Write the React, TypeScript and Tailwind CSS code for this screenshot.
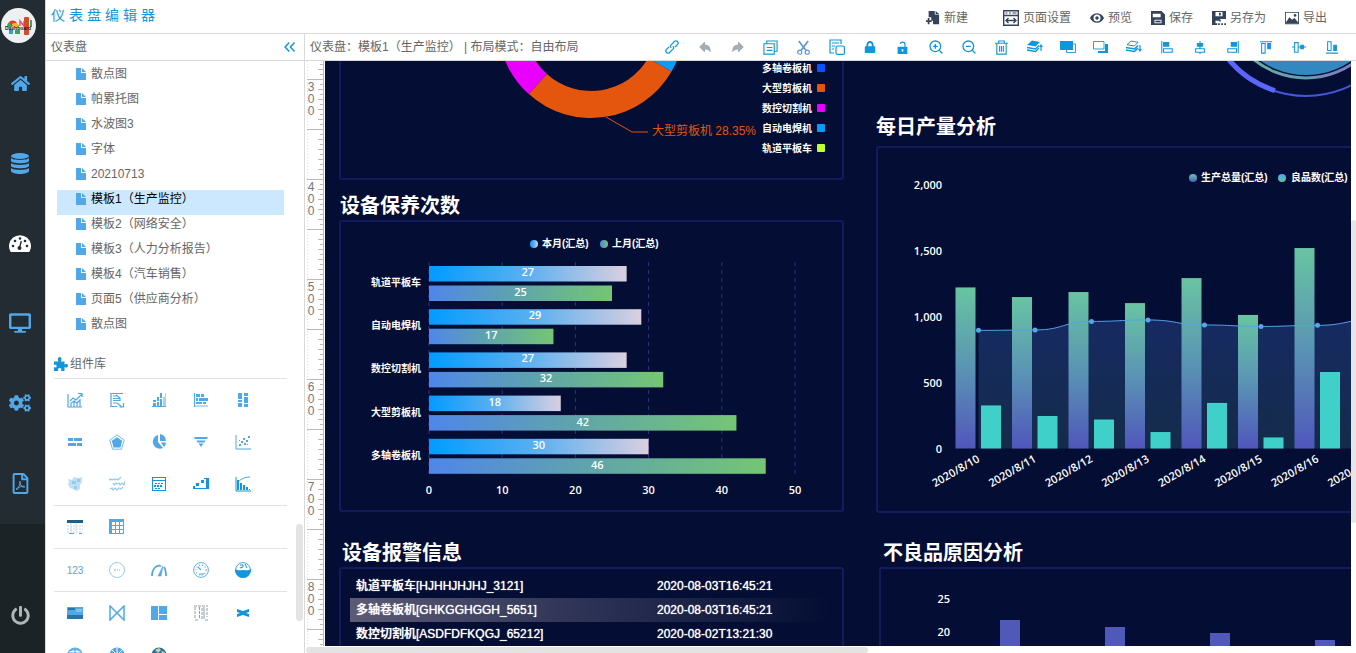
import { useState } from "react";
import type { ReactNode } from "react";
import { ZoomIn, ZoomOut } from "lucide-react";
import { FaCogs, FaDesktop, FaHome, FaLock, FaPowerOff, FaRegFilePdf } from "react-icons/fa";
import { IoArrowRedo, IoArrowUndo } from "react-icons/io5";

interface IconProps {
  children: ReactNode;
  size?: number;
  className?: string;
}

// 16x16 filled glyph; strokes opt in per shape
function Glyph({ children, size = 16, className }: IconProps) {
  return (
    <svg width={size} height={size} viewBox="0 0 16 16" fill="currentColor" className={className} aria-hidden="true">
      {children}
    </svg>
  );
}

// 16x16 outlined glyph
function Outline({ children, size = 16, className }: IconProps) {
  return (
    <svg
      width={size}
      height={size}
      viewBox="0 0 16 16"
      fill="none"
      stroke="currentColor"
      strokeWidth="1.2"
      className={className}
      aria-hidden="true"
    >
      {children}
    </svg>
  );
}

function Logo() {
  return (
    <svg width="35" height="35" viewBox="0 0 35 35" aria-hidden="true">
      <circle cx="17.5" cy="17.5" r="17.5" fill="#eef0f2" />
      <path d="M6 19a6 6 0 0 1 5-6v6z" fill="#3aa655" />
      <path d="M8 14a5 5 0 0 1 8 1l-4 4z" fill="#e23d2e" />
      <path d="M11 16a5 5 0 0 1 7 1v3h-6z" fill="#f2b632" />
      <rect x="8" y="21" width="4" height="5" fill="#2f9fd0" />
      <rect x="14" y="22" width="5" height="4" fill="#3aa655" />
      <path d="M19 18v-5l4 5v-5" fill="none" stroke="#e2557a" strokeWidth="1.5" />
      <rect x="23" y="9" width="5" height="18" rx="1" fill="#d9482b" />
      <rect x="29" y="12" width="2" height="7" fill="#3aa655" />
      <text x="17" y="22" textAnchor="middle" fontSize="5" fontWeight="bold" fill="#1b1b1b">
        Dashboard
      </text>
    </svg>
  );
}

function DatabaseIcon() {
  return (
    <svg width="18" height="21" viewBox="0 0 18 21" fill="currentColor" aria-hidden="true">
      <ellipse cx="9" cy="3" rx="9" ry="3" />
      <path d="M0 5c2 2.500 16 2.500 18 0v3c-1 3-17 3-18 0z" />
      <path d="M0 10c2 2.500 16 2.500 18 0v3c-1 3-17 3-18 0z" />
      <path d="M0 15c2 2.500 16 2.500 18 0v3c-1 4-17 4-18 0z" />
    </svg>
  );
}

function GaugeIcon() {
  return (
    <svg width="22" height="17" viewBox="0 0 22 17" aria-hidden="true">
      <path d="M1.700 17A11 11 0 1 1 20.300 17z" fill="#fff" />
      <g fill="#232b33">
        <circle cx="4" cy="11" r="1.300" />
        <circle cx="6" cy="6" r="1.300" />
        <circle cx="11" cy="3.500" r="1.300" />
        <circle cx="16" cy="6" r="1.300" />
        <circle cx="18" cy="11" r="1.300" />
        <circle cx="10.500" cy="13" r="2" />
      </g>
      <path d="M10.500 13l1.800-7" stroke="#232b33" strokeWidth="1.300" />
    </svg>
  );
}

const navItems = [
  { label: "首页", icon: <FaHome size={19} /> },
  { label: "数据源", icon: <DatabaseIcon /> },
  { label: "仪表盘", icon: <GaugeIcon /> },
  { label: "大屏", icon: <FaDesktop size={22} /> },
  { label: "设置", icon: <FaCogs size={22} /> },
  { label: "报表", icon: <FaRegFilePdf size={21} /> },
];

function SideNav() {
  return (
    <nav className="flex w-[45px] shrink-0 flex-col bg-[#1b2326] text-[#50a8e8]">
      <div className="bg-[#232b33] pb-px">
        <div className="flex h-[43px] items-end pl-px">
          <Logo />
        </div>
        {navItems.map((item) => (
          <a key={item.label} href="#" aria-label={item.label} className="flex h-20 items-center justify-center pr-[5px]">
            {item.icon}
          </a>
        ))}
      </div>
      <div className="flex flex-1 items-end justify-center pr-[5px] pb-7 text-[#aeb6ba]">
        <button type="button" aria-label="退出">
          <FaPowerOff size={19} />
        </button>
      </div>
    </nav>
  );
}

const actions = [
  {
    label: "新建",
    icon: (
      <Glyph size={14}>
        <path d="M3 0h7v4h5v11H8v-4H6V7H3z" />
        <path d="M11 0l4 3.300h-4zM2 8h2v2.500h2.500v2H4V15H2v-2.500H0v-2h2z" />
      </Glyph>
    ),
  },
  {
    label: "页面设置",
    icon: (
      <Outline>
        <path d="M.7.7h14.600v14.600H.7zM.7 5.500h14.600M3 10.500h10M5.500 8L3 10.500 5.500 13M10.500 8l2.500 2.500-2.500 2.500" strokeWidth="1.400" />
        <path d="M2.500 3h2M6 3h2M9.500 3h4" />
      </Outline>
    ),
  },
  {
    label: "预览",
    icon: (
      <Glyph size={14}>
        <path
          fillRule="evenodd"
          d="M8 2.500c4 0 6.800 2.700 8 5.500-1.200 2.800-4 5.500-8 5.500S1.200 10.800 0 8c1.200-2.800 4-5.500 8-5.500zM8 4a4 4 0 1 0 0 8 4 4 0 0 0 0-8zm0 2a2 2 0 1 1 0 4 2 2 0 0 1 0-4z"
        />
      </Glyph>
    ),
  },
  {
    label: "保存",
    icon: (
      <Glyph size={14}>
        <path fillRule="evenodd" d="M0 0h12l4 4v12H0zM2 3v4h9V3zM4 10v4h8v-4z" />
        <path d="M5 11h6v2H5z" />
      </Glyph>
    ),
  },
  {
    label: "另存为",
    icon: (
      <Glyph size={14}>
        <path fillRule="evenodd" d="M0 0h16v9H9v2H4v3h2v2H0zM4 1v5h8V1zM8 2h2v3H8z" />
        <path d="M7 14h2v2H7zM10.500 14h2v2h-2zM14 14h2v2h-2zM8 10h2v2H8z" />
      </Glyph>
    ),
  },
  {
    label: "导出",
    icon: (
      <Glyph size={14}>
        <path fillRule="evenodd" d="M0 1h16v14H0zM1 2v12h14V2z" />
        <path d="M1 13l4-6 3 3 3-2 4 5v1H1z" />
        <circle cx="11.500" cy="5" r="1.500" />
      </Glyph>
    ),
  },
];

function Header() {
  return (
    <header className="flex h-[34px] shrink-0 items-center justify-between border-b border-[#d9d9d9] pr-[29px] pl-[5px]">
      <h1 className="pb-1 text-sm tracking-[4px] text-[#1296db]">仪表盘编辑器</h1>
      <div className="flex items-center gap-[19px] pt-0.5">
        {actions.map((action) => (
          <button
            key={action.label}
            type="button"
            className="flex items-center gap-1 text-xs text-[#666] first:mr-4"
          >
            <span className="text-[#34435a]">{action.icon}</span>
            {action.label}
          </button>
        ))}
      </div>
    </header>
  );
}

const tree = [
  "散点图",
  "帕累托图",
  "水波图3",
  "字体",
  "20210713",
  "模板1（生产监控）",
  "模板2（网络安全）",
  "模板3（人力分析报告）",
  "模板4（汽车销售）",
  "页面5（供应商分析）",
  "散点图",
];

const axis = <path d="M1 1v14h15" fill="none" stroke="currentColor" />;

// component library, one array per separated group
const library: { label: string; icon: ReactNode }[][] = [
  [
    {
      label: "折线图",
      icon: (
        <Outline>
          <path d="M1 2v13h14M3 9l3-3 3 2 6-6M11 1.500h4V5M4 15v-4l3-2v6M7 9l3 2v4M10 11l3-3v7" />
        </Outline>
      ),
    },
    {
      label: "条形折线",
      icon: (
        <Outline>
          <path d="M14 1.500H2v13h6M4 4h5M4 6.500h7v2H4M4 11h4l5 4M14.500 11v4h-4M7 3l4 3" />
        </Outline>
      ),
    },
    {
      label: "柱状图",
      icon: (
        <Glyph>
          <path d="M1 14h14v1H1zM2 8h3v2H2zM2 11h3v3H2zM6 5h2v4H6zM6 10h2v4H6zM9 1h2v5H9zM9 7h2v7H9z" />
          <path d="M12 5h2v9h-2zM14 1h1v13h-1z" opacity=".5" />
        </Glyph>
      ),
    },
    {
      label: "条形图",
      icon: (
        <Glyph>
          <path d="M1 1h1v14H1zM3 2h4v3H3zM8 2h3v3H8zM3 6h2v3H3zM6 6h9v3H6zM3 10h6v2H3zM10 10h3v2h-3z" />
          <path d="M2 13h13v2H2z" opacity=".4" />
        </Glyph>
      ),
    },
    {
      label: "堆叠柱图",
      icon: (
        <Glyph>
          <path d="M3 1h4v6H3zM3 8h4v2H3zM3 11h4v4H3zM9 1h4v3H9zM9 5h4v6H9zM9 12h4v3H9z" />
        </Glyph>
      ),
    },
    {
      label: "堆叠条图",
      icon: (
        <Glyph>
          <path d="M1 4h5v3H1zM7 4h8v3H7zM1 9h8v3H1zM10 9h5v3h-5z" />
        </Glyph>
      ),
    },
    {
      label: "雷达图",
      icon: (
        <Outline>
          <path d="M8 .8l7.200 5.400-2.700 9h-9l-2.700-9z" strokeWidth=".8" />
          <path d="M8 4l4.500 3-1.500 6H5L3.500 7z" fill="currentColor" />
        </Outline>
      ),
    },
    {
      label: "饼图",
      icon: (
        <Glyph>
          <path d="M7 1v7l5 6A7 7 0 1 1 7 1z" />
          <path d="M9 0a7 7 0 0 1 6 7H9zM10 8.500h5a7 7 0 0 1-2 4.500z" />
        </Glyph>
      ),
    },
    {
      label: "漏斗图",
      icon: (
        <Glyph>
          <path d="M1 3h14l-1 2H2zM3.500 6.500h9l-1 2h-7zM5.500 9.500h5L8 13z" />
        </Glyph>
      ),
    },
    {
      label: "散点图",
      icon: (
        <Glyph>
          {axis}
          <path d="M4 10h2v2H4zM6 7h2v2H6zM9 9h2v2H9zM8 4h2v2H8zM11 6h2v2h-2zM13 2h2v2h-2zM4 6h1v1H4zM12 10h1v1h-1z" />
        </Glyph>
      ),
    },
    {
      label: "地图",
      icon: (
        <Glyph className="opacity-60">
          <path d="M1 3l4 1 2-3 4 1 4-1v5l-2 3v4l-4 2-3-2-3-1-2-4 1-2z" opacity=".6" />
          <path d="M5 5h4v3H5zM10 3h3v3h-3zM7 10h3v3H7z" />
        </Glyph>
      ),
    },
    {
      label: "词云",
      icon: (
        <Outline className="opacity-60">
          <path d="M0 3l1 1 1-1 1 1 2-1 1 1 2-1 1 1 3-3M4 7l1 2 2-2 1 1 2-1 1 2 2-2 2 2 1-4M1 13l2-1 1 2 2-2 2 2 2-2 2 1 2-2" />
        </Outline>
      ),
    },
    {
      label: "日历图",
      icon: (
        <Glyph className="text-[#1296db]">
          <path fillRule="evenodd" d="M1 1h14v14H1zM2 2v2h12V2zM2 5v9h12V5z" />
          <path d="M4 7h2v1H4zM7 7h2v1H7zM10 7h2v1h-2zM3 9h2v2H3zM6 9h2v2H6zM9 9h2v2H9zM4 12h2v1H4zM7 12h2v1H7z" />
        </Glyph>
      ),
    },
    {
      label: "瀑布图",
      icon: (
        <Glyph className="text-[#1296db]">
          <path d="M0 10h2v3H0zM3 7h3v3H3zM8 4h3v3H8zM13 2h3v11h-3zM2 12h14v1H2zM11 2h2v1h-2z" />
        </Glyph>
      ),
    },
    {
      label: "帕累托图",
      icon: (
        <Glyph className="text-[#1296db]">
          {axis}
          <path d="M2 4h2v10H2zM5 7h2v7H5zM8 9h2v5H8zM11 11h2v3h-2zM14 13h1v1h-1z" />
          <path d="M2 5c4 0 5-4 13-4" fill="none" stroke="currentColor" strokeWidth=".8" />
        </Glyph>
      ),
    },
  ],
  [
    {
      label: "明细表",
      icon: (
        <Glyph>
          <path d="M0 1h16v3H0z" fill="#1d5f86" />
          <path d="M0 7h16M0 10h16M0 13h16M4 4v9M9 4v9" stroke="#c9d6dc" fill="none" strokeDasharray="2 1" />
          <path d="M2 14h5v1H2zM12 14h3v1h-3z" />
        </Glyph>
      ),
    },
    {
      label: "表格",
      icon: (
        <Glyph>
          <path
            fillRule="evenodd"
            d="M0 0h15v15H0zM3 3v3h3V3zM7 3v3h3V3zM11 3v3h3V3zM3 7v3h3V7zM7 7v3h3V7zM11 7v3h3V7zM3 11v3h3v-3zM7 11v3h3v-3zM11 11v3h3v-3z"
          />
        </Glyph>
      ),
    },
  ],
  [
    { label: "数值", icon: <span className="text-[10px] font-medium">123</span> },
    {
      label: "进度环",
      icon: (
        <Outline>
          <circle cx="8" cy="8" r="7.500" strokeWidth=".6" />
          <path d="M5 8h2M8 8h1M10 8h1" strokeWidth=".8" />
        </Outline>
      ),
    },
    {
      label: "仪表",
      icon: (
        <Outline>
          <path d="M1 14C1 4 8 3 10 4M13 5c2 3 2 5 2 9" strokeWidth="1.800" />
          <path d="M7 14l5-10-2 10z" fill="currentColor" strokeWidth=".6" />
        </Outline>
      ),
    },
    {
      label: "刻度盘",
      icon: (
        <Outline>
          <circle cx="8" cy="8" r="7.400" strokeWidth=".9" />
          <circle cx="8" cy="8" r="5" strokeDasharray="1 2" />
          <path d="M8 8L5 5M6 12h5" />
        </Outline>
      ),
    },
    {
      label: "水波图",
      icon: (
        <Glyph className="text-[#1296db]">
          <circle cx="8" cy="8" r="7.400" fill="none" stroke="currentColor" strokeWidth=".8" />
          <path d="M0 7c3 2 5 1 8 1s5 1 8-1c0 12-16 12-16 0z" />
          <path d="M5 3h3v2L5 6M10 2l2 4" stroke="currentColor" fill="none" />
        </Glyph>
      ),
    },
  ],
  [
    {
      label: "图片",
      icon: (
        <Glyph>
          <path d="M0 2h16v12H0z" />
          <path d="M0 10h16v4H0zM1 3h7v2H1z" fill="#2675ab" />
          <path d="M9 4h6v3H9z" fill="#86bce6" />
        </Glyph>
      ),
    },
    {
      label: "关系图",
      icon: (
        <Outline>
          <path d="M1 1v14L15 1v14L1 1z" strokeWidth="1.500" />
        </Outline>
      ),
    },
    {
      label: "布局",
      icon: (
        <Glyph>
          <path d="M0 1h7v14H0zM8 1h8v8H8zM8 10h8v5H8z" />
        </Glyph>
      ),
    },
    {
      label: "滚动列表",
      icon: (
        <Glyph className="text-[#8f9da8]">
          <path d="M1 1h14M2 15h3M12 15h3M2 2v12M6.500 2v12M9 3v11M14 3v9" stroke="currentColor" fill="none" strokeDasharray="3 1" />
          <path d="M11 2v12" stroke="currentColor" />
        </Glyph>
      ),
    },
    {
      label: "飘带",
      icon: (
        <Glyph className="text-[#1296db]">
          <path d="M2 4l6 2 6-2v3l-3 1 3 1v3l-6-2-6 2V9l3-1-3-1z" />
        </Glyph>
      ),
    },
    {
      label: "地球",
      icon: (
        <Outline>
          <circle cx="8" cy="8" r="7" />
          <path d="M1 6h14M8 1v14M3 4c3-2 7-2 10 0" />
        </Outline>
      ),
    },
    {
      label: "热力",
      icon: (
        <Glyph>
          <circle cx="8" cy="8" r="7.500" />
          <path d="M8 1v7M3 3l5 5M13 3L8 8" stroke="#fff" />
        </Glyph>
      ),
    },
    {
      label: "3D地球",
      icon: (
        <Glyph>
          <circle cx="8" cy="8" r="7.500" fill="#2d6d99" />
          <path d="M4 3l4-2 2 2-3 3zM10 4l4 1-2 3z" fill="#b9d9a8" />
        </Glyph>
      ),
    },
  ],
];

function Sidebar() {
  const [selected, setSelected] = useState(5);

  return (
    <aside className="relative flex w-[259px] shrink-0 flex-col overflow-hidden border-r border-[#d9d9d9]">
      <div className="flex h-[27px] shrink-0 items-center justify-between border-b border-[#d9d9d9] pr-2 pl-[5px] text-xs text-[#666]">
        仪表盘
        <button type="button" aria-label="收起" className="text-[#1296db]">
          <Outline size={12}>
            <path d="M7 2L1.500 8 7 14M14 2L8.500 8l5.500 6" strokeWidth="2" />
          </Outline>
        </button>
      </div>

      <ul className="pt-1 pr-5 pl-[11px] text-xs text-[#666]">
        {tree.map((name, index) => (
          <li key={index}>
            <button
              type="button"
              onClick={() => setSelected(index)}
              className={
                index === selected
                  ? "flex h-[25px] w-full items-start gap-[5px] bg-[#cce8ff] pl-[19px] leading-[18px] text-black"
                  : "flex h-[25px] w-full items-start gap-[5px] pl-[19px] leading-[18px]"
              }
            >
              <svg width="10" height="12" viewBox="0 0 10 12" className="mt-[3px] fill-[#50a8e8]" aria-hidden="true">
                <path d="M0 0h5v5h5v7H0zM6 0l4 4H6z" />
              </svg>
              {name}
            </button>
          </li>
        ))}
      </ul>

      <div className="pr-[17px] pl-2">
        <h2 className="flex h-[39px] items-center gap-0.5 border-b border-[#e2e2e2] pt-2.5 text-xs text-[#666]">
          <Glyph size={14} className="text-[#1296db]">
            <path d="M0 5h5C4 3 4.500 0 6.500 0S9 3 8 5h4v3.500c2-1.200 4-.500 4 1.500s-2 2.700-4 1.500V16H8c1-2 .500-3.500-1.500-3.500S4 14 5 16H0v-4.500c1.500 1 3 .500 3-1S1.500 8.500 0 9.500z" />
          </Glyph>
          组件库
        </h2>
        {library.map((group, index) => (
          <div
            key={index}
            className="grid grid-cols-[repeat(5,42px)] border-b border-[#e2e2e2] text-[#50a8e8] last:border-b-0"
          >
            {group.map((item) => (
              <button
                key={item.label}
                type="button"
                aria-label={item.label}
                className="flex h-[42px] items-center justify-center"
              >
                {item.icon}
              </button>
            ))}
          </div>
        ))}
      </div>

      <div className="absolute right-px bottom-8 h-[97px] w-[7px] rounded bg-[#e3e3e3]" />
    </aside>
  );
}

const tools = [
  {
    label: "链接",
    icon: (
      <Outline size={14}>
        <path d="M7 9a2.500 2.500 0 0 1 0-3.500l4-4A2.500 2.500 0 0 1 14.500 5l-3 3M9 7a2.500 2.500 0 0 1 0 3.500l-4 4A2.500 2.500 0 0 1 1.500 11l3-3" strokeWidth="1.400" />
      </Outline>
    ),
  },
  { label: "撤销", icon: <IoArrowUndo size={14} className="text-[#a3adb3]" /> },
  { label: "重做", icon: <IoArrowRedo size={14} className="text-[#a3adb3]" /> },
  {
    label: "复制",
    icon: (
      <Outline size={15}>
        <path d="M4 4V1h11v11h-3M1 4h11v11H1zM4 8h6M4 11h6" />
      </Outline>
    ),
  },
  {
    label: "剪切",
    icon: (
      <Outline size={15} className="text-[#5f97cf]">
        <path d="M3 1l7.500 10M13 1L5.500 11" strokeWidth="1.800" />
        <circle cx="4" cy="13" r="2.200" />
        <circle cx="12" cy="13" r="2.200" />
      </Outline>
    ),
  },
  {
    label: "粘贴",
    icon: (
      <Outline>
        <path d="M5 14H1V1h11v4M3 4h7M3 7h3M3 10h2" />
        <rect x="7" y="7" width="8.400" height="8.400" rx="1.500" />
      </Outline>
    ),
  },
  { label: "锁定", icon: <FaLock size={12} /> },
  {
    label: "解锁",
    icon: (
      <Glyph size={13}>
        <path fillRule="evenodd" d="M2 7h12v9H2zM7 10v3h2v-3z" />
        <path d="M5 3.500C6 .500 11 .500 11 4v3" fill="none" stroke="currentColor" strokeWidth="1.500" />
      </Glyph>
    ),
  },
  { label: "放大", icon: <ZoomIn size={16} /> },
  { label: "缩小", icon: <ZoomOut size={16} /> },
  {
    label: "删除",
    icon: (
      <Outline size={15}>
        <path d="M1 3.500h14M5 3V1h6v2M3 4v11h10V4M6 6.500v6M8 6.500v6M10 6.500v6" />
      </Outline>
    ),
  },
  {
    label: "上移一层",
    icon: (
      <Glyph>
        <path d="M5 1.500l8 1.500-4.500 4.500L0 6z" />
        <path d="M0 8.500L8.500 10 12 6.500M0 11l8.500 1.500L12 9" fill="none" stroke="currentColor" strokeWidth="1.300" />
        <path d="M14 5l2 3h-1.400v4h-1.200V8H12z" />
      </Glyph>
    ),
  },
  {
    label: "置于顶层",
    icon: (
      <Glyph>
        <path d="M0 2h13v9H0z" />
        <path d="M13 5h2.500v8.500h-9V11" fill="none" stroke="currentColor" strokeWidth=".9" />
      </Glyph>
    ),
  },
  {
    label: "置于底层",
    icon: (
      <Glyph>
        <path d="M5 12v2h10V5h-3v7z" />
        <path d="M.5 2.500h10.500v7.500H.5z" fill="none" stroke="currentColor" strokeWidth=".9" />
      </Glyph>
    ),
  },
  {
    label: "下移一层",
    icon: (
      <Glyph>
        <path d="M5 2l7 1.300L8.300 7 1 5.700z" fill="none" stroke="currentColor" />
        <path d="M0 8.500L8.500 10 12 6.500M0 11l8.500 1.500L12 9" fill="none" stroke="currentColor" strokeWidth="1.600" />
        <path d="M14 13l2-3h-1.400V6h-1.200v4H12z" />
      </Glyph>
    ),
  },
  {
    label: "左对齐",
    icon: (
      <Outline size={14}>
        <path d="M2 1v14M4 10h10v4H4z" />
        <path d="M4 3h6v4H4z" fill="currentColor" />
      </Outline>
    ),
  },
  {
    label: "水平居中",
    icon: (
      <Outline size={14}>
        <path d="M8 1v9M3 10h10v4H3zM8 14v2" />
        <path d="M5 4h6v3H5z" fill="currentColor" />
      </Outline>
    ),
  },
  {
    label: "右对齐",
    icon: (
      <Outline size={14}>
        <path d="M14 1v14M2 10h10v4H2z" />
        <path d="M6 3h6v4H6z" fill="currentColor" />
      </Outline>
    ),
  },
  {
    label: "顶对齐",
    icon: (
      <Outline size={14}>
        <path d="M1 2h14M3 4h4v11H3z" />
        <path d="M10 4h3v6h-3z" fill="currentColor" />
      </Outline>
    ),
  },
  {
    label: "垂直居中",
    icon: (
      <Outline size={14}>
        <path d="M0 8h3M7 8h9M3 3h4v11H3z" />
        <path d="M10 6h3v4h-3z" fill="currentColor" />
      </Outline>
    ),
  },
  {
    label: "底对齐",
    icon: (
      <Outline size={14}>
        <path d="M1 15h14M3 2h4v10H3z" />
        <path d="M10 6h3v6h-3z" fill="currentColor" />
      </Outline>
    ),
  },
];

function Toolbar() {
  return (
    <div className="flex h-[27px] shrink-0 items-center justify-between border-b border-[#d9d9d9] pr-2 pl-[5px] text-xs text-[#666]">
      <span className="whitespace-nowrap">仪表盘：模板1（生产监控） | 布局模式：自由布局</span>
      <div className="flex items-center text-[#1296db]">
        {tools.map((tool) => (
          <button key={tool.label} type="button" aria-label={tool.label} className="flex w-[33px] justify-center">
            {tool.icon}
          </button>
        ))}
      </div>
    </div>
  );
}

// starts at 282 on the canvas scale, one tick every 5px, a label every 100px
function Ruler() {
  const ticks = Array.from({ length: 400 }, (_, i) => i);
  return (
    <svg className="w-[19px] shrink-0" height="100%" aria-hidden="true">
      <path d="M2.500 0V2000" stroke="#ddd" strokeDasharray="1 2" />
      <path d="M18.500 0V2000" stroke="#bbb" />
      {ticks.map((i) => {
        const y = i * 5 + 3;
        const start = i % 10 === 3 ? 2 : i % 2 === 1 ? 13 : 15;
        return <path key={i} d={`M${start} ${y + 0.5}H18`} stroke="#bbb" />;
      })}
      {[3, 4, 5, 6, 7, 8].map((hundred) =>
        String(hundred * 100)
          .split("")
          .map((digit, line) => (
            <text
              key={`${hundred}-${line}`}
              x="6"
              y={(hundred - 3) * 100 + 30 + line * 12}
              textAnchor="middle"
              fontSize="12"
              fill="#777"
            >
              {digit}
            </text>
          )),
      )}
    </svg>
  );
}

const chartFont = "font-['Open_Sans','Noto_Sans_CJK_SC',sans-serif] text-[11px] font-semibold";
const labelFont = "font-['Liberation_Sans','Noto_Sans_CJK_SC',sans-serif] text-[10px] font-bold";

function ring(cx: number, cy: number, inner: number, outer: number, from: number, to: number) {
  const point = (radius: number, deg: number) => {
    const rad = (deg * Math.PI) / 180;
    return `${cx + radius * Math.cos(rad)} ${cy + radius * Math.sin(rad)}`;
  };
  return `M${point(outer, from)}A${outer} ${outer} 0 0 1 ${point(outer, to)}L${point(inner, to)}A${inner} ${inner} 0 0 0 ${point(inner, from)}Z`;
}

const machines = [
  { name: "多轴卷板机", color: "#0a54ff" },
  { name: "大型剪板机", color: "#e4550e" },
  { name: "数控切割机", color: "#ea00ff" },
  { name: "自动电焊机", color: "#0a9bff" },
  { name: "轨道平板车", color: "#c0ff30" },
];

function DonutChart() {
  return (
    <svg width="501" height="117" className="block">
      <path d={ring(250, -36, 66, 93, 132, 210)} fill="#ea00ff" />
      <path d={ring(250, -36, 66, 93, -20, 30)} fill="#0a9bff" />
      <path d={ring(250, -36, 66, 93, 30, 132)} fill="#e4550e" />
      <path d="M265 56l26 15h16" fill="none" stroke="#e4550e" />
      <text x="311" y="74" fontSize="12" fill="#e4550e">
        大型剪板机 28.35%
      </text>
      {machines.map((machine, i) => (
        <g key={machine.name}>
          <text x="471" y={11 + i * 20} textAnchor="end" fill="#fff" className={labelFont}>
            {machine.name}
          </text>
          <rect x="476" y={3 + i * 20} width="8" height="8" rx="1" fill={machine.color} />
        </g>
      ))}
    </svg>
  );
}

const maintenance = [
  { name: "轨道平板车", current: 27, previous: 25 },
  { name: "自动电焊机", current: 29, previous: 17 },
  { name: "数控切割机", current: 27, previous: 32 },
  { name: "大型剪板机", current: 18, previous: 42 },
  { name: "多轴卷板机", current: 30, previous: 46 },
];

function MaintenanceChart() {
  const x = (value: number) => 88 + value * 7.32;
  return (
    <svg width="501" height="288" className="block" fill="#fff">
      <defs>
        <linearGradient id="current">
          <stop offset="0" stopColor="#029bff" />
          <stop offset=".5" stopColor="#5cb0f0" />
          <stop offset="1" stopColor="#dacfe0" />
        </linearGradient>
        <linearGradient id="previous">
          <stop offset="0" stopColor="#4f86ea" />
          <stop offset=".5" stopColor="#60a6a8" />
          <stop offset="1" stopColor="#74c674" />
        </linearGradient>
      </defs>
      <circle cx="193" cy="22" r="4" fill="url(#current)" />
      <text x="201" y="25" className={labelFont}>本月(汇总)</text>
      <circle cx="263" cy="22" r="4" fill="url(#previous)" />
      <text x="271" y="25" className={labelFont}>上月(汇总)</text>
      {[0, 10, 20, 30, 40, 50].map((value) => (
        <g key={value}>
          <path d={`M${x(value)} 40V254`} stroke="#3b2a8e" strokeDasharray="4 4" />
          <text x={x(value)} y="272" textAnchor="middle" className={chartFont}>
            {value}
          </text>
        </g>
      ))}
      {maintenance.map((row, i) => {
        const top = 44 + i * 43.2;
        return (
          <g key={row.name}>
            <text x="80" y={top + 20} textAnchor="end" className={labelFont}>
              {row.name}
            </text>
            <rect x="88" y={top} width={row.current * 7.32} height="15.500" fill="url(#current)" />
            <rect x="88" y={top + 19.5} width={row.previous * 7.32} height="15.500" fill="url(#previous)" />
            <text x={x(row.current / 2)} y={top + 10} textAnchor="middle" className={chartFont}>
              {row.current}
            </text>
            <text x={x(row.previous / 2)} y={top + 30} textAnchor="middle" className={chartFont}>
              {row.previous}
            </text>
          </g>
        );
      })}
    </svg>
  );
}

const alarms = [
  { device: "轨道平板车[HJHHJHJHJ_3121]", time: "2020-08-03T16:45:21" },
  { device: "多轴卷板机[GHKGGHGGH_5651]", time: "2020-08-03T16:45:21" },
  { device: "数控切割机[ASDFDFKQGJ_65212]", time: "2020-08-02T13:21:30" },
];

function AlarmTable() {
  return (
    <table className="mt-[5px] mb-6 ml-[9px] w-[480px] table-fixed text-left text-xs font-medium text-white [text-shadow:0_0_1px_#fff]">
      <tbody>
        {alarms.map((alarm) => (
          <tr key={alarm.device} className="h-6 even:bg-linear-to-r even:from-[#5c5a74] even:via-[#2c3255] even:to-transparent">
            <td className="w-[301px] pl-1.5">{alarm.device}</td>
            <td className="pl-1.5">{alarm.time}</td>
          </tr>
        ))}
      </tbody>
    </table>
  );
}

function GaugeRing() {
  return (
    <svg width="501" height="37" className="block" fill="none">
      <defs>
        <linearGradient id="ring">
          <stop offset=".2" stopColor="#5fb0a0" />
          <stop offset="1" stopColor="#8a6ad0" />
        </linearGradient>
      </defs>
      <circle cx="430" cy="-66" r="101" stroke="#4656d8" strokeWidth="2" />
      <path d={ring(430, -66, 98, 103, 108, 150)} fill="#5b66ff" />
      <circle cx="430" cy="-66" r="83" stroke="url(#ring)" strokeWidth="3" />
      <circle cx="430" cy="-66" r="80" fill="#3488c0" />
    </svg>
  );
}

const output = [
  { day: "2020/8/10", total: 1223, good: 327, rate: 897 },
  { day: "2020/8/11", total: 1150, good: 247, rate: 900 },
  { day: "2020/8/12", total: 1188, good: 220, rate: 965 },
  { day: "2020/8/13", total: 1104, good: 125, rate: 976 },
  { day: "2020/8/14", total: 1294, good: 346, rate: 938 },
  { day: "2020/8/15", total: 1014, good: 84, rate: 927 },
  { day: "2020/8/16", total: 1522, good: 581, rate: 935 },
  { day: "2020/8/17", total: 1300, good: 400, rate: 980 },
];

function OutputChart() {
  const y = (value: number) => 300.5 - value * 0.1317;
  const center = (i: number) => 100.5 + i * 56.5;
  // horizontal control handles half way between points
  const curve = output
    .map((row, i) => {
      if (i === 0) return `M${center(0)} ${y(row.rate)}`;
      const mid = center(i) - 28;
      return `C${mid} ${y(output[i - 1].rate)} ${mid} ${y(row.rate)} ${center(i)} ${y(row.rate)}`;
    })
    .join("");

  return (
    <svg width="501" height="363" className="block" fill="#fff">
      <defs>
        <linearGradient id="total" x2="0" y2="1">
          <stop offset="0" stopColor="#68c4a2" />
          <stop offset=".5" stopColor="#5a94b4" />
          <stop offset="1" stopColor="#5056bc" />
        </linearGradient>
        <linearGradient id="good" x2="0" y2="1">
          <stop offset="0" stopColor="#50a0ff" />
          <stop offset="1" stopColor="#60c890" />
        </linearGradient>
        <linearGradient id="area" x2="0" y2="1">
          <stop offset="0" stopColor="#162a62" />
          <stop offset="1" stopColor="#142c4a" />
        </linearGradient>
      </defs>
      <circle cx="315" cy="30" r="4" fill="url(#total)" />
      <text x="323" y="33" className={labelFont}>生产总量(汇总)</text>
      <circle cx="404" cy="30" r="4" fill="url(#good)" />
      <text x="413" y="33" className={labelFont}>良品数(汇总)</text>
      {[0, 500, 1000, 1500, 2000].map((value) => (
        <text key={value} x="64" y={y(value) + 4} textAnchor="end" className={chartFont}>
          {value.toLocaleString("en-US")}
        </text>
      ))}
      <path d={`${curve}V300.500H100.500Z`} fill="url(#area)" />
      {output.map((row, i) => (
        <g key={row.day}>
          <rect x={center(i) - 23} y={y(row.total)} width="20" height={row.total * 0.1317} fill="url(#total)" />
          <rect x={center(i) + 2.5} y={y(row.good)} width="20" height={row.good * 0.1317} fill="#40d0ca" />
          <text
            transform={`translate(${center(i) + 2} 313) rotate(-30)`}
            textAnchor="end"
            className={chartFont}
          >
            {row.day}
          </text>
        </g>
      ))}
      <path d={curve} fill="none" stroke="#50a4ea" />
      {output.map((row, i) => (
        <circle key={row.day} cx={center(i)} cy={y(row.rate)} r="2.500" fill="#50a8ea" />
      ))}
    </svg>
  );
}

function DefectChart() {
  return (
    <svg width="501" height="140" className="block" fill="#fff">
      <text x="69" y="34" textAnchor="end" className={chartFont}>25</text>
      <text x="69" y="67" textAnchor="end" className={chartFont}>20</text>
      {[51, 58, 64, 71].map((top, i) => (
        <rect key={top} x={119 + i * 105} y={top} width="20" height={140 - top} fill="#5058b8" />
      ))}
    </svg>
  );
}

const panel = "overflow-hidden rounded-[3px] border-2 border-[#141b5c]";

function Canvas() {
  return (
    <div className="flex min-w-0 flex-1 items-start gap-8 overflow-hidden bg-[#040d33] pl-3.5 text-white">
      <div className="w-[505px] shrink-0">
        <section className="overflow-hidden rounded-b-[3px] border-2 border-t-0 border-[#141b5c]">
          <DonutChart />
        </section>
        <h2 className="h-10 pt-3 pl-px text-xl font-bold">设备保养次数</h2>
        <section className={panel}>
          <MaintenanceChart />
        </section>
        <h2 className="h-[55px] pt-[27px] pl-[3px] text-xl font-bold">设备报警信息</h2>
        <section className={panel}>
          <AlarmTable />
        </section>
      </div>
      <div className="w-[505px] shrink-0">
        <GaugeRing />
        <h2 className="h-12 pt-[15px] text-xl font-bold">每日产量分析</h2>
        <section className={panel}>
          <OutputChart />
        </section>
        <div className="pl-[3px]">
          <h2 className="h-[54px] pt-[26px] pl-1 text-xl font-bold">不良品原因分析</h2>
          <section className={panel}>
            <DefectChart />
          </section>
        </div>
      </div>
    </div>
  );
}

export default function App() {
  return (
    <div className="flex h-screen overflow-hidden bg-white font-['Liberation_Sans','Noto_Sans_CJK_SC',sans-serif]">
      <SideNav />
      <div className="flex min-w-0 flex-1 flex-col border-l border-[#d9d9d9]">
        <Header />
        <div className="flex min-h-0 flex-1">
          <Sidebar />
          <main className="flex min-w-0 flex-1 flex-col">
            <Toolbar />
            <div className="flex min-h-0 flex-1">
              <Ruler />
              <div className="w-px shrink-0" />
              <Canvas />
              <div className="w-[5px] shrink-0 pt-[159px]">
                <div className="h-[303px] rounded bg-[#e6e6e6]" />
              </div>
            </div>
            <div className="flex h-[7px] shrink-0 items-end">
              <div className="ml-px h-1.5 w-[562px] rounded bg-[#e3e3e3]" />
            </div>
          </main>
        </div>
      </div>
    </div>
  );
}
